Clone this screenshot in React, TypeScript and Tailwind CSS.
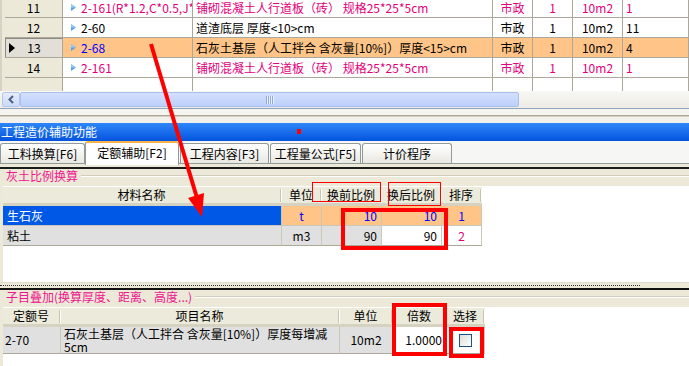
import React from 'react';

interface GridRow {
  no: string;
  code: string;
  name: string;
  kind: string;
  qty: string;
  unit: string;
  last: string;
  pink?: boolean;
  sel?: boolean;
}

const rows: GridRow[] = [
  { no: '11', code: '2-161(R*1.2,C*0.5,J*1.05)', name: '铺砌混凝土人行道板（砖） 规格25*25*5cm', kind: '市政', qty: '1', unit: '10m2', last: '1', pink: true },
  { no: '12', code: '2-60', name: '道渣底层 厚度<10>cm', kind: '市政', qty: '1', unit: '10m2', last: '11' },
  { no: '13', code: '2-68', name: '石灰土基层（人工拌合 含灰量[10%]）厚度<15>cm', kind: '市政', qty: '1', unit: '10m2', last: '4', sel: true },
  { no: '14', code: '2-161', name: '铺砌混凝土人行道板（砖） 规格25*25*5cm', kind: '市政', qty: '1', unit: '10m2', last: '1', pink: true },
];

const TOP_COLS = 'grid grid-cols-[63px_130px_300px_40px_40px_50px_66px]';
const LINE = 'border-r border-b border-[#ABA89B]';

function Tri() {
  return (
    <svg width="5" height="7" viewBox="0 0 5 7" className="shrink-0">
      <path d="M0 0 L5 3.5 L0 7Z" fill="#5AA0E8" />
      <path d="M0 0 L5 3.5 L0 3.5Z" fill="#9CC8F4" />
    </svg>
  );
}

function RowHead({ no, sel }: { no: string; sel?: boolean }) {
  return (
    <div className="flex bg-[#ECE9D8] border-l-2 border-[#D6D3C6] pl-[3px]">
      <div
        className={`flex flex-1 items-center border-r border-b border-[#ABA89B] ${
          sel ? 'bg-[#E1DFD8] border-l border-t border-l-[#8C8A82] border-t-[#8C8A82]' : ''
        }`}
      >
        <div className="flex w-[12px] justify-center">
          {sel && (
            <svg width="6" height="10" viewBox="0 0 6 10">
              <path d="M0 0 L6 5 L0 10Z" fill="#000" />
            </svg>
          )}
        </div>
        <div className="flex-1 text-center">{no}</div>
        <div className="w-[12px]" />
      </div>
    </div>
  );
}

function TopRow({ r }: { r: GridRow }) {
  const tone = r.pink ? 'text-[#E2007A]' : 'text-black';
  const bg = r.sel ? 'bg-[#FFC487]' : 'bg-white';
  return (
    <div className={`${TOP_COLS} h-[20px]`}>
      <RowHead no={r.no} sel={r.sel} />
      <div className={`${LINE} ${bg} flex items-center gap-[5px] overflow-hidden whitespace-nowrap pl-[8px] ${r.sel ? 'text-[#0000FF]' : tone}`}>
        <Tri />
        <span>{r.code}</span>
      </div>
      <div className={`${LINE} ${bg} ${tone} flex items-center overflow-hidden whitespace-nowrap pl-[3px]`}>{r.name}</div>
      <div className={`${LINE} ${bg} ${tone} flex items-center justify-center`}>{r.kind}</div>
      <div className={`${LINE} ${bg} ${tone} flex items-center justify-center`}>{r.qty}</div>
      <div className={`${LINE} ${bg} ${tone} flex items-center justify-center`}>{r.unit}</div>
      <div className={`${LINE} ${bg} ${tone} flex items-center pl-[3px]`}>{r.last}</div>
    </div>
  );
}

function TopGrid() {
  return (
    <div className="h-[91px] overflow-hidden bg-white">
      <div className="-mt-[2px]">
        {rows.map((r) => (
          <TopRow key={r.no} r={r} />
        ))}
        <div className={`${TOP_COLS} h-[20px]`}>
          <RowHead no="" />
          <div className={LINE} />
          <div className={LINE} />
          <div className={LINE} />
          <div className={LINE} />
          <div className={LINE} />
          <div className={LINE} />
        </div>
      </div>
    </div>
  );
}

function ScrollBar() {
  return (
    <div className="flex h-[17px] bg-gradient-to-b from-[#F8F8F4] to-[#EDEBE3] py-[1px] pl-[2px]">
      <div className="flex w-[18px] items-center justify-center rounded-[2px] border border-[#B5C6EE] bg-gradient-to-b from-[#E6EDFB] to-[#CBD9F7]">
        <svg width="6" height="9" viewBox="0 0 6 9">
          <path d="M5 1 L1.5 4.5 L5 8" stroke="#4D6185" strokeWidth="2" fill="none" />
        </svg>
      </div>
      <div className="flex w-[499px] items-center justify-center rounded-[2px] border border-[#A9BFEF] bg-gradient-to-b from-[#D3DFFC] to-[#BDD0FA]">
        <svg width="8" height="8" viewBox="0 0 8 8">
          <path d="M0.5 0 V8 M2.5 0 V8 M4.5 0 V8 M6.5 0 V8" stroke="#8DA9E3" strokeWidth="1" />
          <path d="M1.5 0 V8 M3.5 0 V8 M5.5 0 V8 M7.5 0 V8" stroke="#EEF4FF" strokeWidth="1" />
        </svg>
      </div>
    </div>
  );
}

function TitleBar() {
  return (
    <div className="relative flex h-[18px] items-center bg-gradient-to-b from-[#2E86F8] to-[#0553DE] pl-[1px] text-white">
      工程造价辅助功能
      <span className="absolute left-[297px] top-[6px] h-[5px] w-[4px] bg-[#FF0000]" />
    </div>
  );
}

const tabs = [
  { label: '工料换算[F6]', w: 'w-[85px]', ml: '' },
  { label: '定额辅助[F2]', w: 'w-[94px]', ml: '', active: true },
  { label: '工程内容[F3]', w: 'w-[89px]', ml: 'ml-[1px]' },
  { label: '工程量公式[F5]', w: 'w-[91px]', ml: 'ml-[1px]' },
  { label: '计价程序', w: 'w-[90px]', ml: 'ml-[1px]' },
];

function Tabs() {
  return (
    <>
      <div className="flex h-[22px] items-end bg-[#F6F6F4]">
        {tabs.map((t) =>
          t.active ? (
            <div
              key={t.label}
              className={`relative z-10 -mb-[2px] flex h-[24px] ${t.w} ${t.ml} items-center justify-center rounded-t-[3px] border border-b-0 border-[#919B9C] border-t-2 border-t-[#F5B24A] bg-white pb-[2px]`}
            >
              {t.label}
            </div>
          ) : (
            <div
              key={t.label}
              className={`flex h-[20px] ${t.w} ${t.ml} items-center justify-center rounded-t-[3px] border border-b-0 border-[#919B9C] bg-gradient-to-b from-white to-[#E9E8E1] pt-[1px]`}
            >
              {t.label}
            </div>
          ),
        )}
      </div>
      <div className="h-[1px] bg-[#919B9C]" />
    </>
  );
}

function GroupLabel({ text }: { text: string }) {
  return (
    <div className="flex h-[17px] items-start bg-[#ECE9D8] pl-[6px]">
      <span className="whitespace-nowrap text-[#F0148F]">{text}</span>
      <div className="ml-[3px] mt-[6px] h-0 flex-1 border-t border-b border-t-[#D0CDBE] border-b-white" />
    </div>
  );
}

function HCell({ children }: { children?: React.ReactNode }) {
  return (
    <div className="flex items-center">
      <div className="flex-1 text-center">{children}</div>
      <div className="h-[13px] w-[2px] border-l border-r border-l-[#C7C5B2] border-r-white" />
    </div>
  );
}

const HEAD = 'h-[20px] border-t border-white bg-[#EBEADB] border-b-[3px] border-b-[#D6D2C2]';
const CELL = 'border-r border-b border-[#C9C7BA] flex items-center';

function RatioTable() {
  const cols = 'grid grid-cols-[279px_40px_60px_60px_40px]';
  return (
    <div className="w-[479px]">
      <div className={`${cols} ${HEAD}`}>
        <HCell>材料名称</HCell>
        <HCell>单位</HCell>
        <HCell>换前比例</HCell>
        <HCell>换后比例</HCell>
        <HCell>排序</HCell>
      </div>
      <div className={`${cols} h-[20px]`}>
        <div className={`${CELL} bg-[#0058E6] pl-[4px] text-white`}>生石灰</div>
        <div className={`${CELL} justify-center bg-[#FFC487] text-[#0000FF]`}>t</div>
        <div className={`${CELL} justify-end bg-[#FFC487] pr-[4px] text-[#0000FF]`}>10</div>
        <div className={`${CELL} justify-end bg-[#FFC487] pr-[4px] text-[#0000FF]`}>10</div>
        <div className={`${CELL} justify-center bg-[#FFC487] text-[#0000FF]`}>1</div>
      </div>
      <div className={`${cols} h-[20px]`}>
        <div className={`${CELL} border-b-[#ACA899] bg-[#E0E0E0] pl-[4px]`}>粘土</div>
        <div className={`${CELL} border-b-[#ACA899] justify-center bg-[#E0E0E0]`}>m3</div>
        <div className={`${CELL} border-b-[#ACA899] justify-end bg-[#E0E0E0] pr-[4px]`}>90</div>
        <div className={`${CELL} border-b-[#ACA899] justify-end bg-white pr-[4px]`}>90</div>
        <div className={`${CELL} border-b-[#ACA899] justify-center bg-white text-[#E2007A]`}>2</div>
      </div>
    </div>
  );
}

function ExtraTable() {
  const cols = 'grid grid-cols-[58px_279px_53px_54px_38px]';
  return (
    <div className="w-[482px]">
      <div className={`${cols} ${HEAD}`}>
        <HCell>定额号</HCell>
        <HCell>项目名称</HCell>
        <HCell>单位</HCell>
        <HCell>倍数</HCell>
        <HCell>选择</HCell>
      </div>
      <div className={`${cols} h-[27px]`}>
        <div className={`${CELL} border-b-[#ACA899] bg-[#E0E0E0] pl-[2px]`}>2-70</div>
        <div className={`${CELL} border-b-[#ACA899] bg-[#E0E0E0] pl-[3px]`}>
          <div className="leading-[13px]">
            <div className="whitespace-nowrap">石灰土基层（人工拌合 含灰量[10%]）厚度每增减</div>
            <div>5cm</div>
          </div>
        </div>
        <div className={`${CELL} border-b-[#ACA899] justify-center bg-[#E0E0E0]`}>10m2</div>
        <div className={`${CELL} border-b-[#ACA899] justify-end bg-white pr-[4px]`}>1.0000</div>
        <div className={`${CELL} border-b-[#ACA899] justify-center bg-white`}>
          <div className="h-[13px] w-[13px] border border-[#1C5180] bg-gradient-to-br from-[#DCDCD7] to-white" />
        </div>
      </div>
    </div>
  );
}

function Splitter() {
  return (
    <div className="bg-[#ECE9D8]">
      <div className="h-[1px] bg-[#DEDBD0]" />
      <div className="h-[2px]" />
      <div className="w-[640px] border-t border-dotted border-[#333]" />
      <div className="h-[2px]" />
      <div className="h-[2px] bg-[#111]" />
    </div>
  );
}

function Annotations() {
  return (
    <>
      <div className="absolute left-[312px] top-[182px] h-[20px] w-[69px] border border-[#FF0000]" />
      <div className="absolute left-[388px] top-[182px] h-[24px] w-[53px] border border-[#FF0000]" />
      <div className="absolute left-[341px] top-[208px] h-[42px] w-[107px] border-4 border-[#FF0000]" />
      <div className="absolute left-[392px] top-[303px] h-[53px] w-[55px] border-4 border-[#FF0000]" />
      <div className="absolute left-[449px] top-[327px] h-[31px] w-[35px] border-4 border-[#FF0000]" />
      <svg className="pointer-events-none absolute left-0 top-0" width="689" height="366">
        <line x1="151" y1="44" x2="197" y2="198" stroke="#FF0000" strokeWidth="4" />
        <polygon points="202,217 188,198 204,193" fill="#FF0000" />
      </svg>
    </>
  );
}

export default function App() {
  return (
    <div className="relative flex h-[366px] w-[689px] flex-col overflow-hidden bg-white font-['Noto_Sans_CJK_SC',sans-serif] text-[12px] leading-[14px] text-black">
      <TopGrid />
      <ScrollBar />
      <div className="h-[1px] bg-[#8EA4C0]" />
      <div className="h-[6px] bg-[#F5F4EF]" />
      <div className="h-[1px] bg-[#A9A696]" />
      <div className="h-[1px] bg-[#D4D1C2]" />
      <div className="h-[6px] bg-[#F1F0EA]" />
      <TitleBar />
      <Tabs />
      <div className="h-[3px] bg-[#ECE9D8]" />
      <div className="h-[2px] bg-[#1C1C1C]" />
      <GroupLabel text="灰土比例换算" />
      <div className="h-[96px] bg-[#ECE9D8] pl-[3px]">
        <div className="h-full bg-white">
          <RatioTable />
        </div>
      </div>
      <Splitter />
      <GroupLabel text="子目叠加(换算厚度、距离、高度...)" />
      <div className="flex-1 bg-[#ECE9D8] pl-[3px]">
        <div className="h-full bg-white">
          <ExtraTable />
        </div>
      </div>
      <Annotations />
    </div>
  );
}
